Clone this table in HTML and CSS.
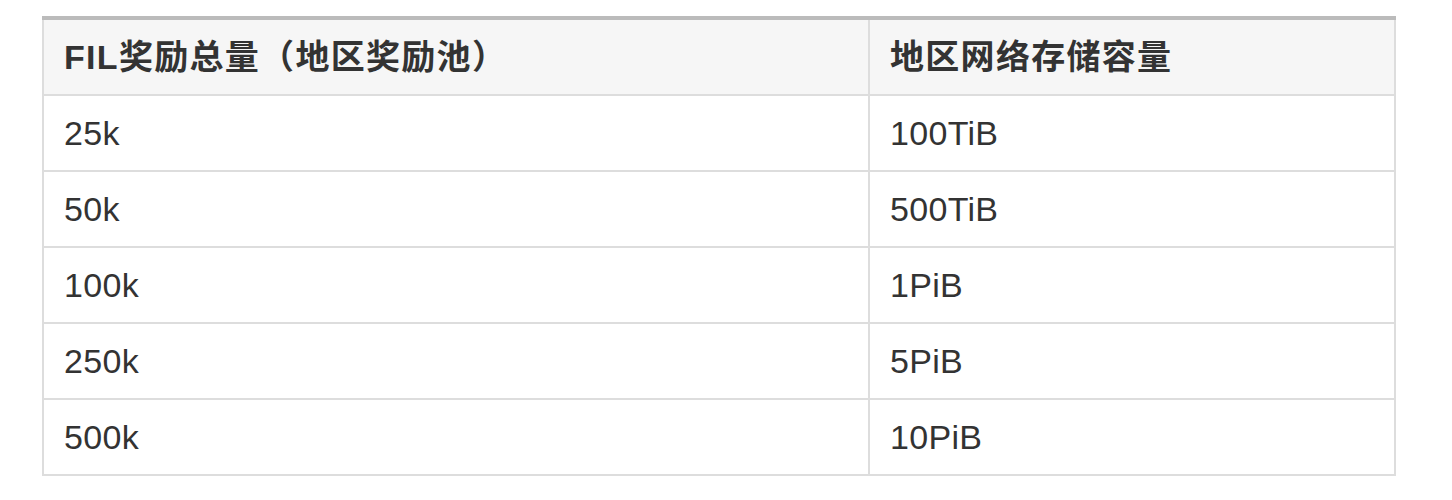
FILE: index.html
```html
<!DOCTYPE html>
<html lang="zh-CN">
<head>
<meta charset="utf-8">
<title>FIL奖励</title>
<link rel="stylesheet" href="styles.css">
</head>
<body>
<div class="page">
  <table class="rewards">
    <colgroup>
      <col class="col-reward">
      <col class="col-capacity">
    </colgroup>
    <thead>
      <tr>
        <th>FIL奖励总量（地区奖励池）</th>
        <th>地区网络存储容量</th>
      </tr>
    </thead>
    <tbody>
      <tr><td>25k</td><td>100TiB</td></tr>
      <tr><td>50k</td><td>500TiB</td></tr>
      <tr><td>100k</td><td>1PiB</td></tr>
      <tr><td>250k</td><td>5PiB</td></tr>
      <tr><td>500k</td><td>10PiB</td></tr>
    </tbody>
  </table>
</div>
</body>
</html>
```

FILE: styles.css
```css
html, body {
  margin: 0;
  padding: 0;
  background: #ffffff;
}

.page {
  padding: 16px 0 0 42px;
}

.rewards {
  border-collapse: collapse;
  table-layout: fixed;
  width: 1354px;
  font-family: "Liberation Sans", "Noto Sans CJK SC", sans-serif;
  font-size: 34px;
  color: #333333;
}

.col-reward {
  width: 826px;
}

.col-capacity {
  width: 526px;
}

.rewards th,
.rewards td {
  border: 2px solid #dddddd;
  padding: 18px 20px;
  line-height: 38px;
  text-align: left;
  vertical-align: middle;
  white-space: nowrap;
}

.rewards thead th {
  background: #f6f6f6;
  font-weight: 700;
  letter-spacing: 1.3px;
  border-top: 4px solid #bbbbbb;
}

.rewards td {
  font-weight: 400;
  letter-spacing: 0.3px;
}
```
